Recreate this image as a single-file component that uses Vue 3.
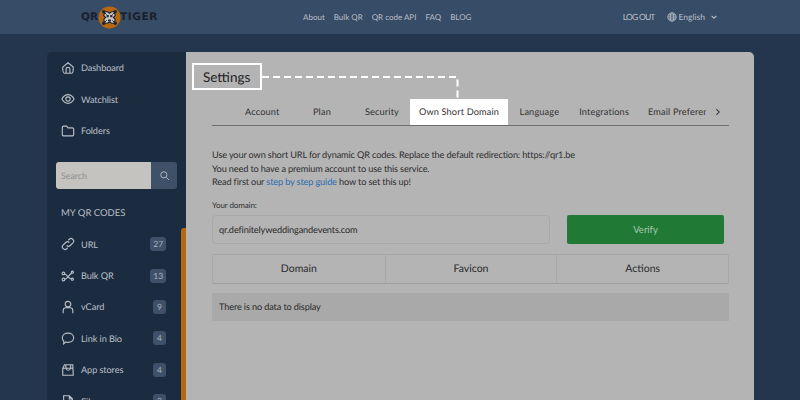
<script setup>
const nav = [
  { label: 'Dashboard', icon: 'home' },
  { label: 'Watchlist', icon: 'eye' },
  { label: 'Folders', icon: 'folder' },
]
const codes = [
  { label: 'URL', count: 27, icon: 'link' },
  { label: 'Bulk QR', count: 13, icon: 'bulk' },
  { label: 'vCard', count: 9, icon: 'user' },
  { label: 'Link in Bio', count: 4, icon: 'bubble' },
  { label: 'App stores', count: 4, icon: 'bag' },
  { label: 'File', count: 3, icon: 'file' },
]
const tabs = ['Account', 'Plan', 'Security', 'Own Short Domain', 'Language', 'Integrations']
const paths = {
  home: 'M2 7 8 2l6 5v1.500c0 3-1 5.500-2 5.500H4c-1 0-2-2.500-2-5.500ZM5.800 14V9.500a2.200 2.200 0 0 1 4.400 0V14',
  eye: 'M1 8c2-3.500 4.500-5 7-5s5 1.500 7 5c-2 3.500-4.500 5-7 5s-5-1.500-7-5ZM8 5.500a2.500 2.500 0 1 0 0 5 2.500 2.500 0 0 0 0-5Z',
  folder: 'M1.500 4C1.500 3 2 2.500 3 2.500h3.500L8 4.500h5c1 0 1.500.5 1.500 1.500v6c0 1-.5 1.500-1.500 1.500H3c-1 0-1.500-.5-1.500-1.500Z',
  link: 'M6.500 9.700a2.900 2.900 0 0 0 4.100 0l3-3a2.900 2.900 0 0 0-4.100-4.100L8.300 3.700M9.500 6.300a2.900 2.900 0 0 0-4.100 0l-3 3a2.900 2.900 0 0 0 4.100 4.100l1.100-1.100',
  bulk: 'M4 5.500c2 1 3 2.500 4 3.500 1 1 2 2 4 2.500M4 12c2-.5 3-2 4-3 1-1.500 2-3 4-4M2.800 3.500a1.500 1.500 0 1 0 0 3 1.500 1.500 0 0 0 0-3ZM2.800 10.500a1.500 1.500 0 1 0 0 3 1.500 1.500 0 0 0 0-3ZM13 10.500a1.200 1.200 0 1 0 0 2.400 1.200 1.200 0 0 0 0-2.400ZM13 2.500a1.200 1.200 0 1 0 0 2.400 1.200 1.200 0 0 0 0-2.400Z',
  user: 'M8 1.500a3.200 3.200 0 1 0 0 6.400 3.200 3.200 0 0 0 0-6.400ZM2.500 15v-3c0-2 1.500-3.200 3.200-3.200h4.600c1.700 0 3.200 1.200 3.200 3.200v3',
  bubble: 'M8 2.500c3.700 0 6.500 2.200 6.500 5.200S11.700 13 8 13c-.9 0-1.800-.1-2.500-.4L3 14.500l.2-2.800C2 10.700 1.500 9.300 1.500 7.700c0-3 2.800-5.200 6.500-5.200Z',
  bag: 'M2 6 4 2h9.500l.5 12H2ZM2 6h12M5.500 2.500v3.500a2.800 2.800 0 0 0 5.500 0V2.500',
  file: 'M3 2h6.500L13 5.500V14H3ZM9.500 2v3.500H13',
}
</script>

<template>
  <div class="page">
    <header class="topbar">
      <div class="logo">
        <span class="logo-word">QR</span>
        <svg class="logo-mark" viewBox="0 0 24 24" width="23" height="23" aria-hidden="true">
          <circle cx="12" cy="12" r="11.500" fill="#b8670f" />
          <path d="M7 6h3l2 1.500L14 6h3l1 4-2 2 2 2-1 4h-3l-2-1.500L10 18H7l-1-4 2-2-2-2Z" fill="#c6c6be" stroke="#1d2633" stroke-width="1.200" />
          <path d="M9 9.500h2.200v2.200H9ZM12.800 9.500H15v2.200h-2.200ZM10.500 14h3v2h-3Z" fill="#1d2633" />
          <path d="M6 6l3 3M18 6l-3 3M6 18l3-3M18 18l-3-3" stroke="#1d2633" stroke-width="1" />
          <circle cx="6" cy="6" r="1.800" fill="#1d2633" />
          <circle cx="18" cy="6" r="1.800" fill="#1d2633" />
          <circle cx="6" cy="18" r="1.800" fill="#1d2633" />
          <circle cx="18" cy="18" r="1.800" fill="#1d2633" />
        </svg>
        <span class="logo-word tiger">TIGER</span>
      </div>
      <nav class="topnav">
        <a>About</a><a>Bulk QR</a><a>QR code API</a><a>FAQ</a><a>BLOG</a>
      </nav>
      <div class="topright">
        <a class="logout">LOG OUT</a>
        <span class="lang">
          <svg viewBox="0 0 12 12" width="10" height="10" fill="none" stroke="currentColor" stroke-width="1">
            <circle cx="6" cy="6" r="5" />
            <ellipse cx="6" cy="6" rx="2.200" ry="5" />
            <path d="M1 6h10M1.700 3.500h8.600M1.700 8.500h8.600" />
          </svg>
          English
          <svg class="chev" viewBox="0 0 10 10" width="8" height="8" fill="none" stroke="currentColor" stroke-width="1.300">
            <path d="m2 3.500 3 3 3-3" />
          </svg>
        </span>
      </div>
    </header>

    <div class="shell">
      <aside class="side">
        <ul class="nav-list">
          <li v-for="item in nav" :key="item.label" class="nav-item">
            <svg viewBox="0 0 16 16" width="14" height="14" fill="none" stroke="currentColor" stroke-width="1.300">
              <path :d="paths[item.icon]" />
            </svg>
            {{ item.label }}
          </li>
        </ul>
        <div class="search">
          <span class="search-input">Search</span>
          <span class="search-btn">
            <svg viewBox="0 0 16 16" width="11" height="11" fill="none" stroke="currentColor" stroke-width="1.300">
              <circle cx="7" cy="7" r="4.500" />
              <path d="m10.500 10.500 4 4" />
            </svg>
          </span>
        </div>
        <h3 class="side-title">MY QR CODES</h3>
        <ul class="code-list">
          <li v-for="item in codes" :key="item.label" class="code-item">
            <svg viewBox="0 0 16 16" width="14" height="14" fill="none" stroke="currentColor" stroke-width="1.300">
              <path :d="paths[item.icon]" />
            </svg>
            <span class="code-label">{{ item.label }}</span>
            <span class="badge">{{ item.count }}</span>
          </li>
        </ul>
        <span class="thumb"></span>
      </aside>

      <main class="main">
        <h1 class="title"><span class="title-box">Settings</span></h1>
        <svg class="dash" width="200" height="24" fill="none" stroke="#fff" stroke-width="2" aria-hidden="true">
          <path d="M0 1h195.500v22" stroke-dasharray="7 4" />
        </svg>
        <div class="tabs">
          <span v-for="t in tabs" :key="t" class="tab" :class="{ active: t === 'Own Short Domain' }">{{ t }}</span>
          <span class="tab clipped"><span>Email Preferences</span></span>
          <svg class="tab-next" viewBox="0 0 10 10" width="8" height="8" fill="none" stroke="#333" stroke-width="1.300">
            <path d="m3 1.500 3.500 3.500L3 8.500" />
          </svg>
        </div>
        <div class="intro">
          <p>Use your own short URL for dynamic QR codes. Replace the default redirection: https://qr1.be</p>
          <p>You need to have a premium account to use this service.</p>
          <p>Read first our <a>step by step guide</a> how to set this up!</p>
        </div>
        <label class="field-label">Your domain:</label>
        <div class="field-row">
          <div class="input">qr.definitelyweddingandevents.com</div>
          <button class="verify">Verify</button>
        </div>
        <div class="thead">
          <span>Domain</span><span>Favicon</span><span>Actions</span>
        </div>
        <div class="empty">There is no data to display</div>
      </main>
    </div>
  </div>
</template>

<style>
html, body { margin: 0; overflow: hidden; }
</style>

<style scoped>
.page {
  width: 800px;
  height: 400px;
  overflow: hidden;
  background: #24364e;
  font-family: Lato, "Liberation Sans", sans-serif;
  text-rendering: geometricPrecision;
  display: flex;
  flex-direction: column;
}
.topbar {
  height: 34px;
  flex: none;
  background: #374c67;
  display: flex;
  align-items: center;
  color: #b9bfc8;
  font-size: 8.500px;
  padding-left: 81px;
}
.logo { display: flex; align-items: center; width: 222px; }
.logo-word {
  font-family: "DejaVu Sans", sans-serif;
  font-weight: 700;
  font-size: 10.500px;
  color: #18202c;
}
.tiger { letter-spacing: .6px; }
.logo-mark { margin: 0 -1px 0 0; }
.topnav { display: flex; gap: 9px; font-size: 8px; }
.topright { display: flex; align-items: center; gap: 12px; margin-left: auto; margin-right: 82px; }
.logout { letter-spacing: -.8px; }
.lang { display: inline-flex; align-items: center; gap: 2px; }
.chev { margin-left: 3px; }

.shell {
  flex: 1;
  display: flex;
  margin: 18px 46px 0 47px;
  min-height: 0;
}
.side {
  width: 139px;
  flex: none;
  background: #1c2c40;
  border-radius: 5px 0 0 0;
  position: relative;
  color: #b9bfc8;
  font-size: 9.200px;
  letter-spacing: -.1px;
  padding: 0 9px;
  box-sizing: border-box;
  overflow: hidden;
}
ul { list-style: none; margin: 0; padding: 0; }
.nav-list { padding: 0 5px; }
.nav-item { height: 31.500px; display: flex; align-items: center; gap: 6px; }
.search { display: flex; height: 27px; margin-top: 15px; border-radius: 3px; overflow: hidden; width: 121px; }
.search-input {
  flex: 1;
  background: #c4c3bf;
  color: #8f9194;
  display: flex;
  align-items: center;
  padding-left: 5px;
  font-size: 9px;
}
.search-btn {
  width: 26px;
  background: #3f5069;
  display: flex;
  align-items: center;
  justify-content: center;
}
.side-title {
  font-size: 9.500px;
  font-weight: 400;
  letter-spacing: 0;
  margin: 19px 0 0 5px;
  line-height: 12px;
}
.code-list { padding: 0 5px; margin-top: 9px; }
.code-item { height: 31.400px; display: flex; align-items: center; gap: 6px; }
.code-label { flex: 1; }
.badge {
  background: #3f5069;
  border-radius: 3px;
  height: 14px;
  min-width: 13px;
  padding: 0 3px;
  box-sizing: border-box;
  display: flex;
  align-items: center;
  justify-content: center;
  font-size: 8.500px;
  color: #aab1bb;
  margin-right: 6px;
}
.thumb {
  position: absolute;
  right: 0;
  top: 176px;
  bottom: 0;
  width: 5px;
  background: #b8670f;
  border-radius: 3px 0 0 0;
}
.main {
  flex: 1;
  min-width: 0;
  background: #b4b4b4;
  border-radius: 0 5px 0 0;
  position: relative;
  padding: 11px 25px 0 26px;
  color: #2a2a2a;
  box-sizing: border-box;
}
.title { margin: 0 0 0 -20px; font-weight: 400; font-size: 13.500px; height: 27px; }
.title-box {
  display: flex;
  width: 70px;
  height: 27px;
  box-sizing: border-box;
  border: 2px solid #fff;
  align-items: center;
  padding-left: 9px;
  color: #222;
}
.dash { position: absolute; left: 76px; top: 24px; }
.tabs {
  display: flex;
  align-items: center;
  height: 26px;
  margin-top: 9px;
  border-bottom: 1px solid #6d6d6d;
  font-size: 9.200px;
  color: #333;
  letter-spacing: .15px;
}
.tab {
  height: 26px;
  box-sizing: border-box;
  padding-bottom: 1px;
  display: flex;
  align-items: center;
  justify-content: center;
  flex: none;
}
.tab:nth-child(1) { margin-left: 33px; }
.tab:nth-child(2) { margin-left: 33.500px; }
.tab:nth-child(3) { margin-left: 34px; }
.tab.active { background: #fff; width: 98px; margin-left: 11px; }
.tab:nth-child(5) { margin-left: 11.500px; }
.tab:nth-child(6) { margin-left: 20px; }
.tab.clipped { margin-left: 19px; width: 58px; overflow: hidden; justify-content: flex-start; white-space: nowrap; }
.tab-next { margin-left: 7.500px; }
.intro { margin-top: 22px; font-size: 9.200px; letter-spacing: -.15px; line-height: 13.500px; color: #2e2e2e; }
.intro p { margin: 0; }
.intro a { color: #2c6cb0; }
.field-label { display: block; font-size: 8px; letter-spacing: -.1px; margin-top: 11px; line-height: 11px; color: #333; }
.field-row { display: flex; gap: 17px; margin-top: 4px; }
.input {
  width: 338px;
  height: 29px;
  box-sizing: border-box;
  border: 1px solid #a9a9a9;
  border-radius: 4px;
  display: flex;
  align-items: center;
  padding-left: 6px;
  font-size: 9.200px;
  letter-spacing: -.14px;
  color: #2a2a2a;
}
.verify {
  width: 157px;
  height: 29px;
  background: #207a36;
  border: 0;
  border-radius: 2px;
  color: #a9c9b2;
  font: inherit;
  font-size: 9.500px;
  padding: 0;
}
.thead {
  display: grid;
  grid-template-columns: repeat(3, 1fr);
  height: 30px;
  margin-top: 10px;
  box-sizing: border-box;
  border: 1px solid #a6a8a8;
  border-bottom-color: #9a9d9e;
  border-radius: 2px;
  font-size: 10.500px;
  color: #2b2b2b;
}
.thead span { display: flex; align-items: center; justify-content: center; }
.thead span + span { border-left: 1px solid #a8a8a8; }
.empty {
  height: 28px;
  margin-top: 9px;
  background: #a9a9a9;
  display: flex;
  align-items: center;
  padding-left: 7px;
  font-size: 9.200px;
  letter-spacing: -.14px;
  color: #2a2a2a;
}
</style>
